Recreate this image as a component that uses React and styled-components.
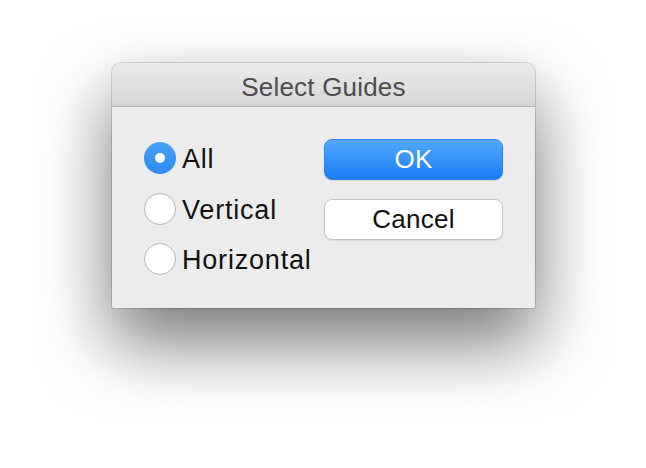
import React, { useState } from "react";
import styled, { createGlobalStyle } from "styled-components";

const GlobalStyle = createGlobalStyle`
  html, body {
    margin: 0;
    padding: 0;
    background: #ffffff;
  }
  body {
    font-family: "Liberation Sans", Arial, sans-serif;
  }
`;

const options = ["All", "Vertical", "Horizontal"];

export default function App() {
  const [selected, setSelected] = useState("All");

  return (
    <>
      <GlobalStyle />
      <Page>
        <Window>
          <TitleBar>Select Guides</TitleBar>
          <Body>
            <RadioGroup>
              {options.map((opt) => (
                <RadioRow key={opt} onClick={() => setSelected(opt)}>
                  <RadioCircle $checked={selected === opt} />
                  <RadioLabel>{opt}</RadioLabel>
                </RadioRow>
              ))}
            </RadioGroup>
            <ButtonColumn>
              <Button $primary>OK</Button>
              <Button>Cancel</Button>
            </ButtonColumn>
          </Body>
        </Window>
      </Page>
    </>
  );
}

const Page = styled.div`
  width: 646px;
  height: 468px;
  padding: 63px 0 0 112px;
  box-sizing: border-box;
  overflow: hidden;
`;

const Window = styled.div`
  width: 423px;
  height: 245px;
  background: #ececec;
  border-radius: 9px 9px 2px 2px;
  box-shadow: 0 0 0 1px rgba(0, 0, 0, 0.14), 0 34px 70px 2px rgba(0, 0, 0, 0.52);
  display: flex;
  flex-direction: column;
  overflow: hidden;
`;

const TitleBar = styled.div`
  height: 44px;
  flex: none;
  display: flex;
  align-items: center;
  justify-content: center;
  background: linear-gradient(#ebebeb, #d6d6d6);
  border-bottom: 1px solid #b3b3b3;
  color: #4c4c4c;
  font-size: 26px;
  letter-spacing: 0.2px;
  padding-top: 5px;
  box-sizing: border-box;
`;

const Body = styled.div`
  flex: 1;
  display: flex;
  justify-content: space-between;
  padding: 31px 32px 0 32px;
`;

const RadioGroup = styled.div`
  display: flex;
  flex-direction: column;
  gap: 18.5px;
  padding-top: 4px;
`;

const RadioRow = styled.div`
  display: flex;
  align-items: center;
  gap: 6px;
  height: 32px;
  cursor: default;
`;

const RadioCircle = styled.span`
  width: 32px;
  height: 32px;
  border-radius: 50%;
  box-sizing: border-box;
  flex: none;
  position: relative;
  background: ${(p) => (p.$checked ? "linear-gradient(#4aa3f8, #2b8af2)" : "#ffffff")};
  border: ${(p) => (p.$checked ? "none" : "1.5px solid #b5b5b5")};
  &::after {
    content: "";
    display: ${(p) => (p.$checked ? "block" : "none")};
    position: absolute;
    left: 11px;
    top: 11px;
    width: 10px;
    height: 10px;
    border-radius: 50%;
    background: #ffffff;
  }
`;

const RadioLabel = styled.span`
  font-size: 27px;
  letter-spacing: 0.8px;
  color: #111111;
  line-height: 32px;
  padding-top: 2px;
`;

const ButtonColumn = styled.div`
  display: flex;
  flex-direction: column;
  gap: 19px;
  padding-top: 1px;
`;

const Button = styled.button`
  width: 179px;
  height: 41px;
  border-radius: 8px;
  box-sizing: border-box;
  font-family: "Liberation Sans", Arial, sans-serif;
  font-size: 26px;
  letter-spacing: 0.3px;
  padding: 0;
  display: flex;
  align-items: center;
  justify-content: center;
  color: ${(p) => (p.$primary ? "#ffffff" : "#111111")};
  background: ${(p) => (p.$primary ? "linear-gradient(#53a9ff, #1a7cf4)" : "#ffffff")};
  border: ${(p) => (p.$primary ? "1px solid #2a83ee" : "1.5px solid #c4c4c4")};
  box-shadow: ${(p) => (p.$primary ? "0 1px 1px rgba(0,0,0,0.1)" : "0 1px 1px rgba(0,0,0,0.08)")};
`;
